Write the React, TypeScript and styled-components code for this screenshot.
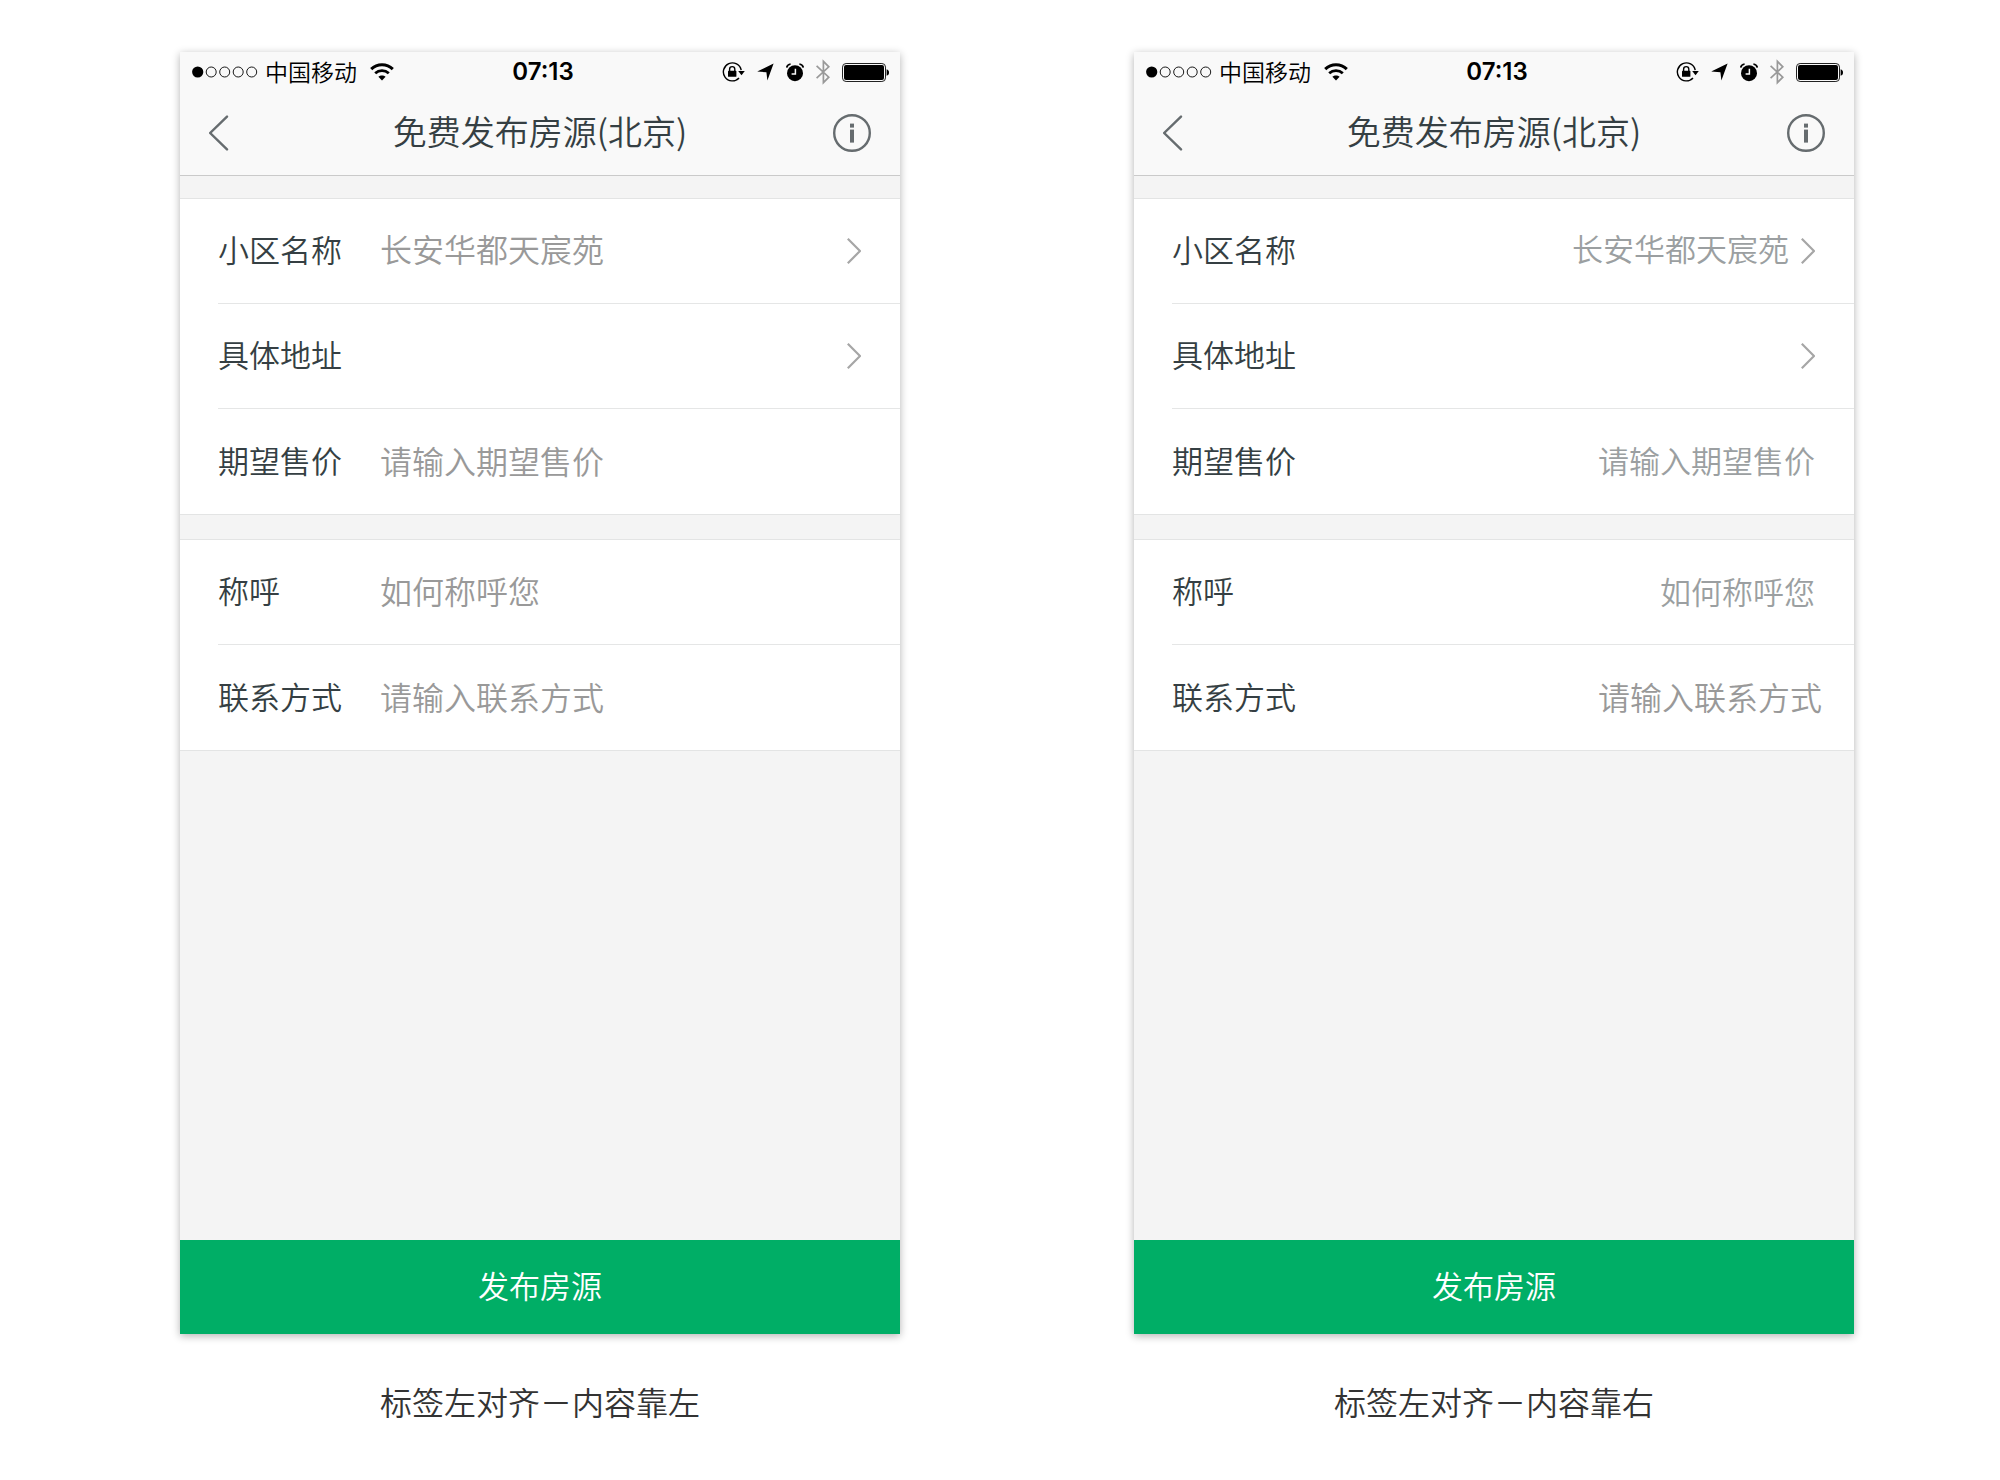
import React, { useId } from "react";
import styled, { createGlobalStyle } from "styled-components";

const GlobalStyle = createGlobalStyle`
  *, *::before, *::after { box-sizing: border-box; }
  body {
    margin: 0;
    background: #fff;
    font-family: "Noto Sans CJK SC", sans-serif;
  }
  button, input { font: inherit; color: inherit; }
`;

type Align = "left" | "right";

const Page = styled.main`
  display: grid;
  grid-template-columns: repeat(auto-fit, minmax(560px, 1fr));
  gap: 60px 234px;
  padding: 52px 146px 48px 180px;
`;

const Sample = styled.figure`
  margin: 0;
  display: flex;
  flex-direction: column;
`;

const Caption = styled.figcaption`
  padding-top: 43px;
  font-size: 32px;
  line-height: 48px;
  font-weight: 350;
  text-align: center;
  color: #333;
`;

const Phone = styled.section`
  display: flex;
  flex-direction: column;
  min-height: 1282px;
  background: #f4f4f4;
  box-shadow: 0 2px 8px rgba(0, 0, 0, 0.3);
`;

const Header = styled.header`
  background: #f9f9f9;
  border-bottom: 1px solid #cacaca;
`;

const StatusBar = styled.div`
  display: grid;
  grid-template-columns: 1fr auto 1fr;
  align-items: center;
  height: 40px;
  padding: 0 6px 0 12px;
  color: #000;
`;

const StatusLeft = styled.div`
  display: flex;
  align-items: center;
`;

const Carrier = styled.span`
  margin: 0 13px 0 7px;
  padding-bottom: 2px;
  font-size: 23px;
  line-height: 32px;
  font-weight: 350;
`;

const Clock = styled.time`
  font-family: Inter, sans-serif;
  font-size: 24px;
  line-height: 32px;
  font-weight: 600;
`;

const StatusRight = styled.div`
  display: flex;
  align-items: center;
  justify-content: flex-end;
  gap: 12px;
  padding-right: 5px;
`;

const NavBar = styled.nav`
  display: grid;
  grid-template-columns: 1fr auto 1fr;
  align-items: center;
  height: 83px;
  padding: 0 29px 2px;
`;

const Title = styled.h1`
  margin: 0;
  padding-bottom: 4px;
  font-size: 34px;
  line-height: 48px;
  font-weight: 350;
  color: #353f43;
`;

const IconButton = styled.button<{ $end?: boolean }>`
  display: flex;
  justify-self: ${(p) => (p.$end ? "end" : "start")};
  padding: 0;
  border: 0;
  background: none;
  color: #666c6f;
  cursor: pointer;
`;

const Form = styled.form`
  flex: 1;
  display: flex;
  flex-direction: column;
  gap: 24px;
  padding-top: 22px;
`;

const Group = styled.div`
  background: #fff;
  border-top: 1px solid #e3e4e4;
  border-bottom: 1px solid #e3e4e4;
`;

const Row = styled.div<{ $wide?: boolean }>`
  display: flex;
  align-items: center;
  height: 105px;
  margin-left: 38px;
  padding-right: ${(p) => (p.$wide ? 32 : 39)}px;
  border-bottom: 1px solid #e5e6e6;

  &:last-child {
    border-bottom: 0;
  }
`;

const Label = styled.label`
  flex: none;
  width: 162px;
  padding-bottom: 4px;
  font-size: 31px;
  line-height: 48px;
  color: #353f43;
  font-weight: 350;
`;

const Field = styled.input<{ $align: Align; $large: boolean }>`
  flex: 1;
  min-width: 0;
  height: 52px;
  padding: 0 0 4px;
  border: 0;
  outline: 0;
  background: none;
  font-size: ${(p) => (p.$large ? 32 : 31)}px;
  font-weight: 350;
  text-align: ${(p) => p.$align};
  color: #353f43;

  &::placeholder {
    color: ${(p) => (p.$large ? "#999" : "#9b9fa1")};
    opacity: 1;
  }
`;

const Picker = styled.button<{ $align: Align }>`
  flex: 1;
  display: flex;
  align-items: center;
  gap: 12px;
  height: 56px;
  padding: 0;
  border: 0;
  background: none;
  font-size: ${(p) => (p.$align === "left" ? 32 : 31)}px;
  line-height: 48px;
  font-weight: 350;
  color: ${(p) => (p.$align === "left" ? "#999" : "#9b9fa1")};
  cursor: pointer;
`;

const PickerValue = styled.span<{ $align: Align }>`
  flex: 1;
  padding-bottom: 6px;
  text-align: ${(p) => p.$align};
`;

const Submit = styled.button`
  height: 94px;
  padding: 0 0 4px;
  border: 0;
  background: #00ae66;
  font-size: 31px;
  line-height: 48px;
  font-weight: 350;
  color: #fff;
  cursor: pointer;
`;

const SignalDots = () => (
  <svg width="66" height="12" viewBox="0 0 66 12" aria-hidden="true">
    <circle cx="5.7" cy="6" r="5.6" fill="#000" />
    {[19.2, 32.7, 46.2, 59.7].map((x) => (
      <circle key={x} cx={x} cy="6" r="5" fill="none" stroke="#000" strokeWidth="0.9" />
    ))}
  </svg>
);

const WifiIcon = () => (
  <svg width="24" height="18" viewBox="0 0 24 18" fill="none" stroke="#000" aria-hidden="true">
    <path d="M1.2 6.2C7.2.4 16.8.4 22.8 6.2" strokeWidth="3" />
    <path d="M5.2 10.3c3.9-3.6 9.7-3.6 13.6 0" strokeWidth="2.8" />
    <path d="M8.4 13.8c2-1.9 5.2-1.9 7.2 0L12 17.4z" fill="#000" stroke="none" />
  </svg>
);

const RotationLockIcon = () => (
  <svg width="23" height="20" viewBox="0 0 23 20" aria-hidden="true">
    <path d="M19.2 8.2A9 9 0 1 0 17 16" fill="none" stroke="#000" strokeWidth="1.4" />
    <path d="M16.2 9h6.6l-3.3 4.2z" fill="#000" />
    <rect x="6" y="8.8" width="8.4" height="6" rx="0.6" fill="#000" />
    <path d="M7.6 9V7.2a2.6 2.6 0 0 1 5.2 0V9" fill="none" stroke="#000" strokeWidth="1.4" />
  </svg>
);

const LocationIcon = () => (
  <svg width="17" height="18" viewBox="0 0 17 18" aria-hidden="true">
    <path d="M16.6.6L10.4 17.4 9.4 9.2.2 8.6z" fill="#000" />
  </svg>
);

const AlarmIcon = () => (
  <svg width="18" height="19" viewBox="0 0 18 19" fill="none" aria-hidden="true">
    <circle cx="9" cy="10.2" r="8" fill="#000" />
    <path d="M.7 4.6C1 2.8 2.4 1.3 4.6 1M17.3 4.6C17 2.8 15.6 1.3 13.4 1" stroke="#000" strokeWidth="1.7" />
    <path d="M9.4 5.8v5.2H5.6" stroke="#f9f9f9" strokeWidth="1.5" />
  </svg>
);

const BluetoothIcon = () => (
  <svg width="14" height="26" viewBox="0 0 14 26" fill="none" stroke="#999" strokeWidth="1.7" aria-hidden="true">
    <path d="M.6 6.8l12.2 11.4L7.4 23.6V2.4l5.4 5.4L.6 19.2" />
  </svg>
);

const BatteryIcon = () => (
  <svg width="47" height="19" viewBox="0 0 47 19" aria-hidden="true">
    <rect x="0.5" y="0.5" width="43" height="18" rx="3.6" fill="none" stroke="#222" />
    <rect x="2" y="2" width="40" height="15" rx="2" fill="#000" />
    <path d="M44.6 6.2c1.6.4 2.4 1.6 2.4 3.3s-.8 2.9-2.4 3.3z" fill="#000" />
  </svg>
);

const BackIcon = () => (
  <svg width="20" height="36" viewBox="0 0 20 36" fill="none" stroke="currentColor" strokeWidth="2.4" strokeLinecap="round" aria-hidden="true">
    <path d="M18 1.6L1.2 18 18 34.4" />
  </svg>
);

const InfoIcon = () => (
  <svg width="38" height="38" viewBox="0 0 38 38" aria-hidden="true">
    <circle cx="19" cy="19" r="17.8" fill="none" stroke="currentColor" strokeWidth="2.4" />
    <rect x="17" y="9.6" width="4" height="4" fill="currentColor" />
    <rect x="17" y="15.6" width="4" height="13" fill="currentColor" />
  </svg>
);

const ChevronIcon = () => (
  <svg width="14" height="26" viewBox="0 0 14 26" fill="none" stroke="#a6a6a6" strokeWidth="2.2" aria-hidden="true">
    <path d="M.8.8L13 13 .8 25.2" />
  </svg>
);

interface Item {
  label: string;
  kind: "picker" | "text";
  text: string;
}

const groups: Item[][] = [
  [
    { label: "小区名称", kind: "picker", text: "长安华都天宸苑" },
    { label: "具体地址", kind: "picker", text: "" },
    { label: "期望售价", kind: "text", text: "请输入期望售价" },
  ],
  [
    { label: "称呼", kind: "text", text: "如何称呼您" },
    { label: "联系方式", kind: "text", text: "请输入联系方式" },
  ],
];

function FormRow({ item, align, large }: { item: Item; align: Align; large: boolean }) {
  const id = useId();
  return (
    <Row $wide={align === "right" && large}>
      <Label htmlFor={id}>{item.label}</Label>
      {item.kind === "picker" ? (
        <Picker id={id} type="button" $align={align}>
          <PickerValue $align={align}>{item.text}</PickerValue>
          <ChevronIcon />
        </Picker>
      ) : (
        <Field id={id} type="text" placeholder={item.text} $align={align} $large={large} />
      )}
    </Row>
  );
}

function ListingScreen({ align }: { align: Align }) {
  const formId = useId();
  return (
    <Phone>
      <Header>
        <StatusBar>
          <StatusLeft>
            <SignalDots />
            <Carrier>中国移动</Carrier>
            <WifiIcon />
          </StatusLeft>
          <Clock>07:13</Clock>
          <StatusRight>
            <RotationLockIcon />
            <LocationIcon />
            <AlarmIcon />
            <BluetoothIcon />
            <BatteryIcon />
          </StatusRight>
        </StatusBar>
        <NavBar>
          <IconButton type="button" aria-label="返回">
            <BackIcon />
          </IconButton>
          <Title>免费发布房源(北京)</Title>
          <IconButton type="button" aria-label="说明" $end>
            <InfoIcon />
          </IconButton>
        </NavBar>
      </Header>
      <Form id={formId} onSubmit={(e) => e.preventDefault()}>
        {groups.map((items, i) => (
          <Group key={i}>
            {items.map((item) => (
              <FormRow
                key={item.label}
                item={item}
                align={align}
                large={align === "left" || item.label === "联系方式"}
              />
            ))}
          </Group>
        ))}
      </Form>
      <Submit type="submit" form={formId}>
        发布房源
      </Submit>
    </Phone>
  );
}

export default function App() {
  return (
    <>
      <GlobalStyle />
      <Page>
        <Sample>
          <ListingScreen align="left" />
          <Caption>标签左对齐－内容靠左</Caption>
        </Sample>
        <Sample>
          <ListingScreen align="right" />
          <Caption>标签左对齐－内容靠右</Caption>
        </Sample>
      </Page>
    </>
  );
}
